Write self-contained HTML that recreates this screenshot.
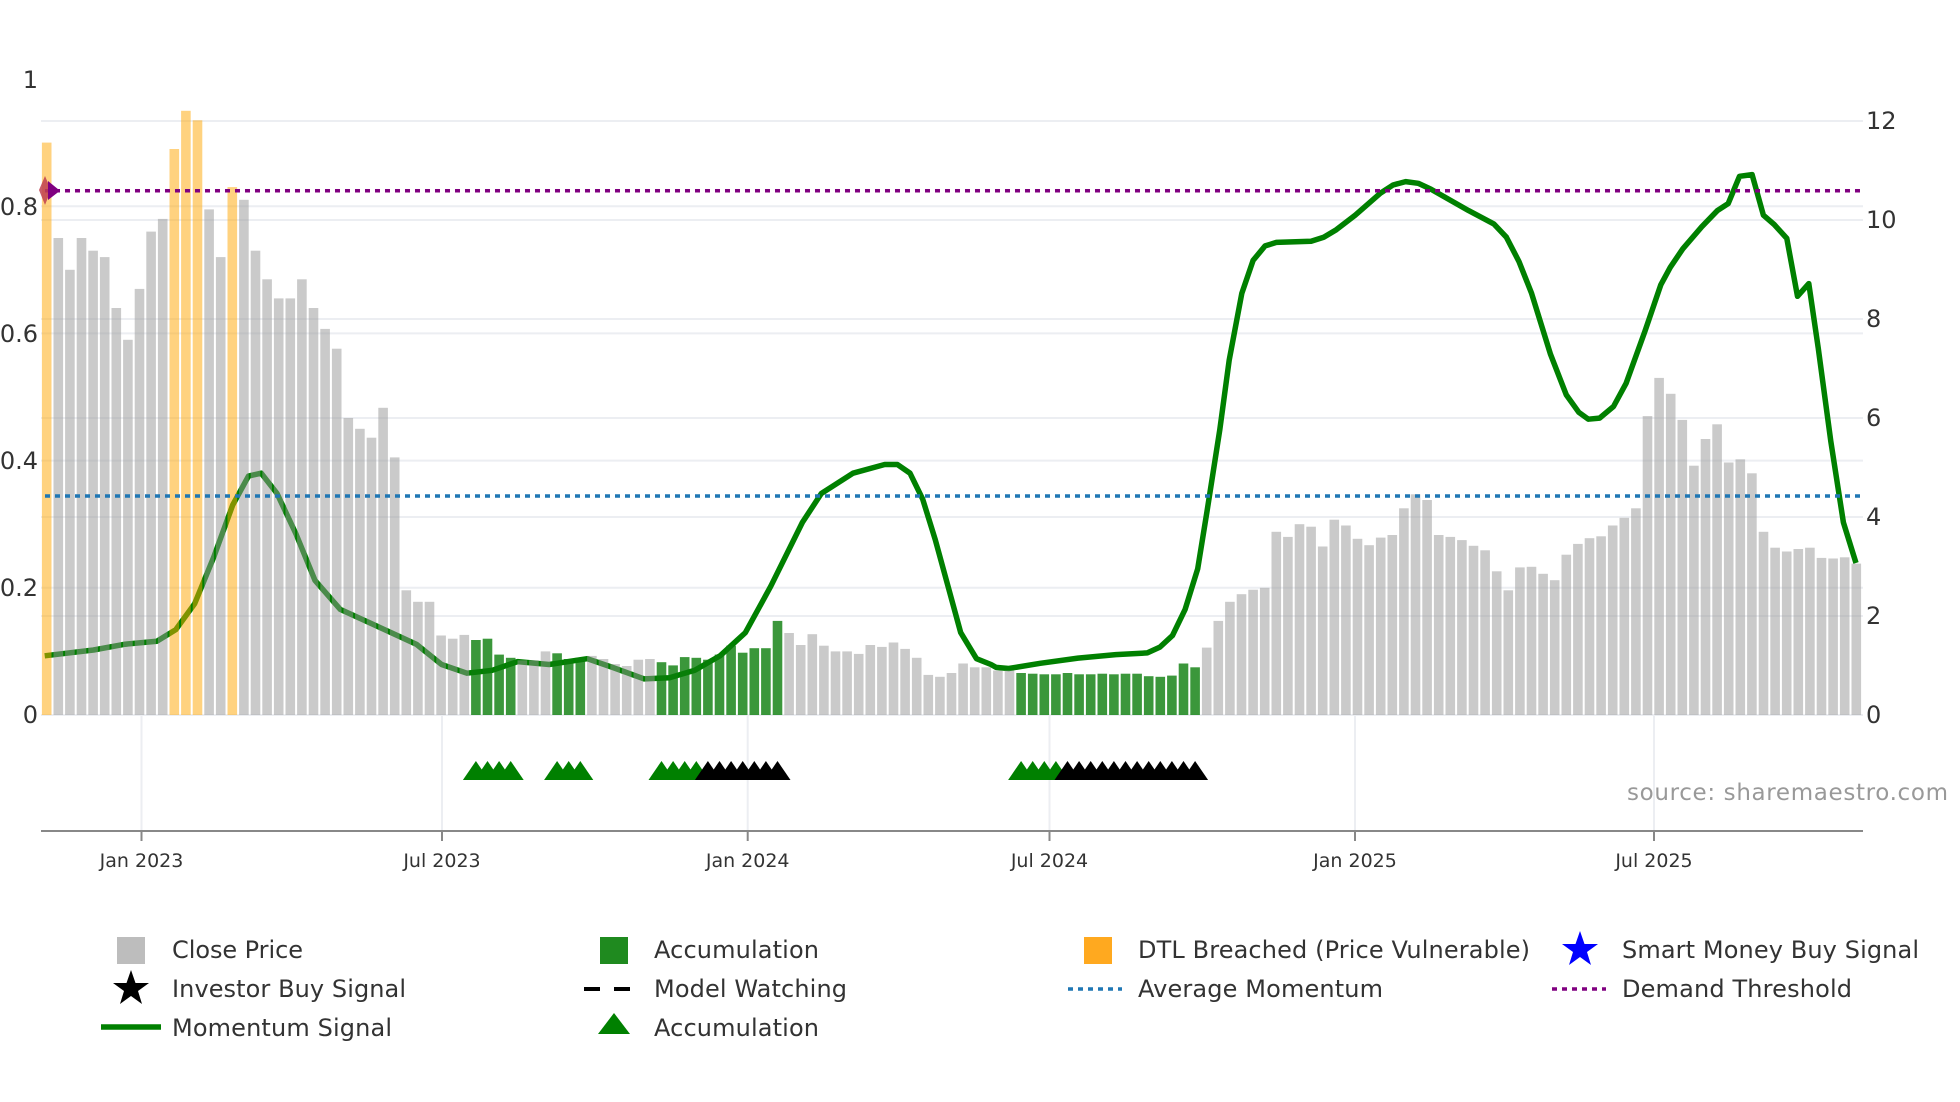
<!DOCTYPE html>
<html><head><meta charset="utf-8"><style>
html,body{margin:0;padding:0;background:#fff;}
svg{display:block;}
text{font-family:"DejaVu Sans","Liberation Sans",sans-serif;fill:#333;}
</style></head><body>
<svg id="s" width="1960" height="1102" viewBox="0 0 1960 1102" xmlns="http://www.w3.org/2000/svg">
<g id="grid" stroke="#eceef2" stroke-width="2"></g>
<g id="vgrid" stroke="#eceef2" stroke-width="2"></g>
<path id="mom" fill="none" stroke="#008000" stroke-width="5.5" stroke-linejoin="round"/>
<g id="bars"></g>
<line x1="45" y1="496" x2="1863" y2="496" stroke="#1f77b4" stroke-width="3.5" stroke-dasharray="5,5"/>
<line x1="45" y1="190.7" x2="1863" y2="190.7" stroke="#800080" stroke-width="3.5" stroke-dasharray="5,5"/>
<polygon points="45,176 51,190 45,205 39,190" fill="#c0404f" opacity="0.85"/>
<polygon points="48,181 60,190.7 48,200" fill="#800080"/>
<g id="tris"></g>
<line x1="41" y1="831" x2="1863" y2="831" stroke="#888" stroke-width="2"/>
<g id="ticks" stroke="#888" stroke-width="2"></g>
<g font-size="24" text-anchor="end">
<text x="38" y="88">1</text><text x="38" y="215">0.8</text><text x="38" y="342">0.6</text>
<text x="38" y="469">0.4</text><text x="38" y="596">0.2</text><text x="38" y="723">0</text>
</g>
<g font-size="24">
<text x="1866" y="129">12</text><text x="1866" y="228">10</text><text x="1866" y="327">8</text>
<text x="1866" y="426">6</text><text x="1866" y="525">4</text><text x="1866" y="624">2</text><text x="1866" y="723">0</text>
</g>
<g font-size="19" text-anchor="middle">
<text x="141.5" y="867">Jan 2023</text><text x="442" y="867">Jul 2023</text><text x="747.7" y="867">Jan 2024</text>
<text x="1049.5" y="867">Jul 2024</text><text x="1355" y="867">Jan 2025</text><text x="1654" y="867">Jul 2025</text>
</g>
<text x="1627" y="800" font-size="23" fill="#999" style="fill:#999" textLength="321">source: sharemaestro.com</text>
<g font-size="24">
<rect x="117" y="937" width="28" height="27" fill="#bdbdbd"/>
<text x="172" y="958" textLength="131">Close Price</text>
<polygon points="131,970 135.5,983 149,983 138,991 142,1004 131,996 120,1004 124,991 113,983 126.5,983" fill="#000"/>
<text x="172" y="997" textLength="234">Investor Buy Signal</text>
<line x1="101" y1="1027" x2="161" y2="1027" stroke="#008000" stroke-width="5.5"/>
<text x="172" y="1036" textLength="220">Momentum Signal</text>

<rect x="600" y="937" width="28" height="27" fill="#1f8a1f"/>
<text x="654" y="958" textLength="165">Accumulation</text>
<line x1="584" y1="989" x2="640" y2="989" stroke="#000" stroke-width="4" stroke-dasharray="16,14"/>
<text x="654" y="997" textLength="193">Model Watching</text>
<polygon points="614,1013 630,1034 598,1034" fill="#008000"/>
<text x="654" y="1036" textLength="165">Accumulation</text>

<rect x="1084" y="937" width="28" height="27" fill="#ffa91f"/>
<text x="1138" y="958" textLength="392">DTL Breached (Price Vulnerable)</text>
<line x1="1068" y1="989" x2="1122" y2="989" stroke="#1f77b4" stroke-width="3.5" stroke-dasharray="5,5"/>
<text x="1138" y="997" textLength="245">Average Momentum</text>

<polygon points="1580,931 1584.5,944 1598,944 1587,952 1591,965 1580,957 1569,965 1573,952 1562,944 1575.5,944" fill="#0000ff"/>
<text x="1622" y="958" textLength="297">Smart Money Buy Signal</text>
<line x1="1552" y1="989" x2="1606" y2="989" stroke="#800080" stroke-width="3.5" stroke-dasharray="5,5"/>
<text x="1622" y="997" textLength="230">Demand Threshold</text>
</g>
</svg>
<script>
var NS="http://www.w3.org/2000/svg";
function el(p,t,a){var e=document.createElementNS(NS,t);for(var k in a)e.setAttribute(k,a[k]);document.getElementById(p).appendChild(e);return e;}
// gridlines
[0.2,0.4,0.6,0.8].forEach(function(v){var y=715-v*636;el("grid","line",{x1:41,x2:1863,y1:y,y2:y});});
[2,4,6,8,10,12].forEach(function(v){var y=715-v*49.5;el("grid","line",{x1:41,x2:1863,y1:y,y2:y});});
el("grid","line",{x1:41,x2:1863,y1:715,y2:715});
var ticks=[141.5,442,747.7,1049.5,1355,1654];
ticks.forEach(function(x){el("vgrid","line",{x1:x,x2:x,y1:716,y2:831});el("ticks","line",{x1:x,x2:x,y1:831,y2:841});});
// momentum
var z1=[[73,1130],[150,1120],[200,1110],[250,1105],[280,1085],[310,1040],[340,960],[370,870],[395,820],[415,815],[440,850],[470,920],[500,1000],[540,1050],[600,1080],[660,1110],[700,1145],[740,1160],[780,1155],[820,1140],[870,1145],[930,1135],[970,1150],[1020,1170],[1060,1168],[1100,1155],[1140,1130],[1180,1090],[1220,1010],[1270,900],[1300,850],[1350,815],[1400,800],[1420,800],[1440,815],[1460,860],[1480,930],[1500,1010],[1520,1090],[1545,1135],[1568,1145]];
var z2=[[10,1150],[30,1152],[80,1143],[140,1134],[200,1128],[250,1125],[270,1115],[290,1095],[310,1050],[330,980],[345,880],[365,740],[380,620],[400,505],[418,448],[437,423],[455,417],[510,415],[530,408],[550,395],[580,370],[620,332],[640,318],[660,312],[680,315],[700,325],[760,362],[800,385],[820,408],[840,450],[860,505],[890,610],[915,680],[935,710],[950,722],[968,720],[990,700],[1010,660],[1040,570],[1065,490],[1080,460],[1100,428],[1130,390],[1155,362],[1172,350],[1190,303],[1210,300],[1228,370],[1245,386],[1265,410],[1282,510],[1300,488],[1315,600],[1335,760],[1355,900],[1375,970]];
var pts=[];
z1.forEach(function(p){pts.push([p[0]*0.633-1.5,p[1]*0.5797+0.7]);});
z2.forEach(function(p){pts.push([989.8+p[0]*0.630,p[1]*0.5797+0.7]);});
var d="M"+pts[0][0].toFixed(1)+" "+pts[0][1].toFixed(1);
for(var i=1;i<pts.length;i++){d+=" L"+pts[i][0].toFixed(1)+" "+pts[i][1].toFixed(1);}
document.getElementById("mom").setAttribute("d",d);
// bars
var v=[.90,.75,.70,.75,.73,.72,.64,.59,.67,.76,.78,.89,.95,.935,.795,.72,.83,.81,.73,.685,.655,.655,.685,.64,.607,.576,.467,.45,.436,.483,.405,
.196,.178,.178,.125,.12,.126,.118,.12,.095,.09,.086,.086,.1,.097,.088,.09,.093,.088,.08,.077,.087,.088,.083,.078,.091,.09,.087,.095,.109,.098,.105,.105,.148,.129,.11,.127,.109,.1,.1,.096,.11,.107,.114,.104,.09,.063,.06,.066,.081,.075,.075,
.07,.07,.066,.065,.064,.064,.066,.064,.064,.065,.064,.065,.065,.061,.06,.062,.081,.075,.106,.148,
.178,.19,.197,.2,.288,.28,.3,.296,.265,.307,.298,.277,.267,.279,.283,.325,.347,.338,.283,.28,
.275,.266,.259,.226,.196,.232,.233,.222,.212,.252,.269,.278,.281,.298,.31,.325,.47,.53,.505,.464,
.392,.434,.457,.397,.402,.38,.288,.263,.257,.261,.263,.247,.246,.248,.238];
var orange={0:1,11:1,12:1,13:1,16:1};
function isG(i){return (i>=37&&i<=40)||(i>=44&&i<=46)||(i>=53&&i<=63)||(i>=84&&i<=99);}
for(var i=0;i<v.length;i++){
 var cx=46.7+11.6*i,h=v[i]*636;
 var col=orange[i]?"rgba(255,165,0,0.5)":(isG(i)?"rgba(10,125,10,0.8)":"rgba(150,150,150,0.5)");
 el("bars","rect",{x:(cx-4.8).toFixed(1),y:(715-h).toFixed(1),width:9.6,height:h.toFixed(1),fill:col});
}
// triangles
function tri(i,c){var cx=46.7+11.6*i;el("tris","polygon",{points:(cx-13)+",780 "+cx+",761 "+(cx+13)+",780",fill:c});}
var g=[37,38,39,40,44,45,46,53,54,55,56,84,85,86,87],b=[57,58,59,60,61,62,63,88,89,90,91,92,93,94,95,96,97,98,99];
g.forEach(function(i){tri(i,"#008000");});b.forEach(function(i){tri(i,"#000");});
</script>
</body></html>
